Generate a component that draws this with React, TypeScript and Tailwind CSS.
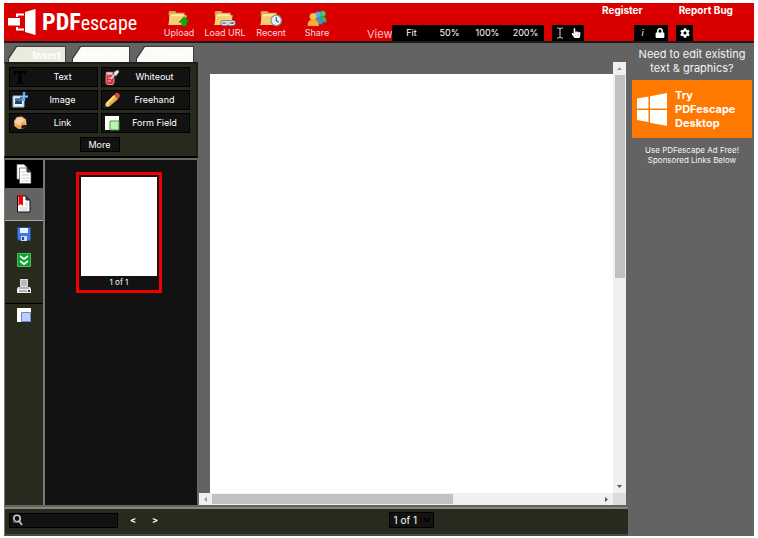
import React from "react";
import { FaCog, FaHandPointer, FaLock } from "react-icons/fa";

type IconProps = { className?: string };

const FolderShape = () => (
  <>
    <path d="M1 2.5 2 1h6l1.5 2H18v13H2z" fill="#d9a441" />
    <path d="M3 4h14v11H3z" fill="#f7e3a0" />
    <path d="M1 16 3.5 6H20l-1.500 10z" fill="#f6cd74" />
    <path d="M1 16 3.500 6H20" fill="none" stroke="#fff0bd" strokeWidth=".7" />
  </>
);

const UploadIcon = ({ className }: IconProps) => (
  <svg className={className} viewBox="0 0 24 18">
    <FolderShape />
    <path d="m17.500 7 5.500 6h-3v4h-5v-4h-3z" fill="#16a816" stroke="#078207" strokeWidth=".6" />
  </svg>
);

const LinkFolderIcon = ({ className }: IconProps) => (
  <svg className={className} viewBox="0 0 24 18">
    <FolderShape />
    <g fill="none" stroke="#68748a" strokeWidth="2.800">
      <rect x="8.500" y="12" width="6.500" height="3.500" rx="1.700" />
      <rect x="15.500" y="12" width="6.500" height="3.500" rx="1.700" />
    </g>
    <g fill="none" stroke="#dde4f0" strokeWidth="1.200">
      <rect x="8.500" y="12" width="6.500" height="3.500" rx="1.700" />
      <rect x="15.500" y="12" width="6.500" height="3.500" rx="1.700" />
      <path d="M12 13.700h6" />
    </g>
  </svg>
);

const RecentIcon = ({ className }: IconProps) => (
  <svg className={className} viewBox="0 0 24 18">
    <FolderShape />
    <circle cx="17.500" cy="11" r="5.500" fill="#e9f1f6" stroke="#8295a3" strokeWidth="1.300" />
    <path d="M17.500 7.500V11l2.500 2" fill="none" stroke="#344b5c" strokeWidth="1.100" />
  </svg>
);

const ShareIcon = ({ className }: IconProps) => (
  <svg className={className} viewBox="0 0 24 18">
    <g strokeWidth=".4">
      <path d="M13 13c0-5 2-6 5-6s4 2 4 6z" fill="#40b84b" stroke="#227d30" />
      <circle cx="18" cy="4" r="3.200" fill="#51c85b" stroke="#227d30" />
      <path d="M8 15c0-6 2-7 5-7s5 2 5 7z" fill="#3697dd" stroke="#17639b" />
      <circle cx="13" cy="5" r="3.500" fill="#54b2eb" stroke="#17639b" />
      <path d="M2 17c0-5 2-7 6-7s6 2 6 7z" fill="#ffac36" stroke="#bd6810" />
      <circle cx="8" cy="7" r="3.900" fill="#ffbd51" stroke="#bd6810" />
    </g>
  </svg>
);

const LogoMark = ({ className }: IconProps) => (
  <svg className={className} viewBox="0 0 28 27" fill="#fff">
    <path d="M17 3 27.500 0v26L17 23z" />
    <path d="M0 9h12v7.500H0z" />
    <path d="M8 4.500h8v2h-6V8H8zM8 18h2v1.500h6v2H8z" />
  </svg>
);

const TextIcon = ({ className }: IconProps) => (
  <svg className={className} viewBox="0 0 16 16">
    <path d="M2 2h12v4h-1l-1-2.500H9.500V13l2 .5v1h-7v-1l2-.5V3.500H4L3 6H2z" fill="#000" stroke="#050505" strokeWidth=".5" />
  </svg>
);

const WhiteoutIcon = ({ className }: IconProps) => (
  <svg className={className} viewBox="0 0 16 16">
    <path d="M2 6h8v8l-1 1.500H3L2 14z" fill="#d5353d" stroke="#f1a5a5" strokeWidth=".8" />
    <path d="M2 3h7v3H2z" fill="#efd8d8" stroke="#a93b42" strokeWidth=".7" />
    <path d="M4 9h4M4 12h3" stroke="#ffc1c1" />
    <path d="m7 10 5-7" stroke="#d8dee2" strokeWidth="1.500" />
    <path d="m10 3 4-2 1 2-3 4-2-1z" fill="#eee" stroke="#888" strokeWidth=".6" />
  </svg>
);

const ImageIcon = ({ className }: IconProps) => (
  <svg className={className} viewBox="0 0 16 16">
    <path d="M1 4h11v11H1z" fill="#e9f3fb" stroke="#9db4ca" />
    <path d="M3 6h7v6H3z" fill="#447ba8" />
    <path d="m3 11 2-3 2 2 2-1 1 2v1H3z" fill="#183e62" />
    <path d="M12 0v9M8 4.500h8" stroke="#295c94" strokeWidth="3" />
    <path d="M12 0v9M8 4.500h8" stroke="#8cc5f2" strokeWidth="1.500" />
  </svg>
);

const PencilIcon = ({ className }: IconProps) => (
  <svg className={className} viewBox="0 0 16 16">
    <path d="m1 15 1-4L10 3l4 4-8 7z" fill="#e7b23d" stroke="#9f6414" strokeWidth=".5" />
    <path d="m2 11 8-8 1.500 1.500-8 8z" fill="#ffe083" />
    <path d="m10 3 2-2c2-1 5 2 3.500 4L14 7z" fill="#e44242" />
    <path d="m1 15 1-4 4 3z" fill="#eed9b0" />
    <path d="m1 15 .5-2 1.500 1.500z" fill="#111" />
  </svg>
);

const LinkIcon = ({ className }: IconProps) => (
  <svg className={className} viewBox="0 0 16 16">
    <path d="m5 2 5-.5 4 3 .5 5-3 4-5 .5-4-3L2 6z" fill="#f5b77c" />
    <path d="m5 3 4-.5 3 2-2 4-4 1-3-3z" fill="#ffd0a0" />
    <path d="M10 10h4v4l-2-1-2 1-1-2z" fill="#291b12" />
    <path d="M4 11c4 2 6 0 6-3l3 1" fill="none" stroke="#f19b47" strokeWidth="1.500" />
  </svg>
);

const FormIcon = ({ className }: IconProps) => (
  <svg className={className} viewBox="0 0 16 16">
    <path d="M1 1h14v14H1z" fill="#fff" />
    <path d="M6 6h9v9H6z" fill="#b9f6ae" stroke="#4a9950" />
  </svg>
);

const PagesIcon = ({ className }: IconProps) => (
  <svg className={className} viewBox="0 0 16 20">
    <path d="M1 .5h7l3 3V15H1z" fill="#fff" stroke="#999" strokeWidth=".7" />
    <path d="M3.500 4H11l4 4v11.500H3.500z" fill="#fff" stroke="#555" strokeWidth=".7" />
    <path d="M11 4v4h4" fill="#333" stroke="#333" />
    <path d="M5.500 8h4M5.500 11h7.500M5.500 14h7.500M5.500 17h7.500" stroke="#ccc" />
  </svg>
);

const BookmarkIcon = ({ className }: IconProps) => (
  <svg className={className} viewBox="0 0 16 18">
    <path d="M1.500 1H10l4 4v12H1.500z" fill="#fff" stroke="#111" />
    <path d="M10 1v4h4" fill="#444" stroke="#222" />
    <path d="M4 13h8M4 15h8M9 8h3M9 10h3" stroke="#ccc" />
    <path d="M2.500 0H7v11L4.700 9 2.500 11z" fill="#f00000" />
  </svg>
);

const SaveIcon = ({ className }: IconProps) => (
  <svg className={className} viewBox="0 0 14 14">
    <path d="M.5.500h13v13H2l-1.500-1.500z" fill="#4778dc" stroke="#284d9f" />
    <path d="M3 1h8v5H3z" fill="#e8f1ff" />
    <path d="M4 9h6v5H4z" fill="#c8d9f3" />
    <path d="M5 10h2v3H5z" fill="#234b91" />
  </svg>
);

const DownloadIcon = ({ className }: IconProps) => (
  <svg className={className} viewBox="0 0 14 14">
    <path d="M.5.500h13v13H.5z" fill="#08a12b" stroke="#57b568" />
    <path d="m3 3 4 3 4-3M3 8l4 3 4-3" fill="none" stroke="#eaffea" strokeWidth="1.800" />
  </svg>
);

const PrintIcon = ({ className }: IconProps) => (
  <svg className={className} viewBox="0 0 14 14">
    <path d="M3 0h8v8H3z" fill="#ddd" />
    <path d="M4 2h6M4 4h6M4 6h6" stroke="#999" />
    <path d="M1 8h12l1 2v4H0v-4z" fill="#eee" />
    <path d="M2 9h10M2 12h8" stroke="#777" />
    <path d="M11 11h2v2h-2z" fill="#333" />
  </svg>
);

const StampIcon = ({ className }: IconProps) => (
  <svg className={className} viewBox="0 0 14 14">
    <path d="M0 0h14v14H0z" fill="#fff" />
    <path d="M4.500 4.500h9v9h-9z" fill="#bdcdff" stroke="#7185c6" />
  </svg>
);

const CursorIcon = ({ className }: IconProps) => (
  <svg className={className} viewBox="0 0 8 12">
    <path d="M1 1h2l1 1 1-1h2M4 2v8M1 11h2l1-1 1 1h2" fill="none" stroke="#ccc" />
  </svg>
);

const WindowsIcon = ({ className }: IconProps) => (
  <svg className={className} viewBox="0 0 30 33" fill="#fff">
    <path d="M0 5.500 11.500 3.500v12H0zM13 3.200 30 0v15.500H13zM0 17h11.500v12L0 27zM13 17h17v16l-17-3.200z" />
  </svg>
);

const SearchIcon = ({ className }: IconProps) => (
  <svg className={className} viewBox="0 0 12 12" fill="none">
    <circle cx="5" cy="4.500" r="3.200" stroke="#ccc" strokeWidth="1.600" />
    <path d="m7 7 3 4" stroke="#bbb" strokeWidth="2" />
    <path d="M1 8h4" stroke="#888" />
  </svg>
);

const files = [
  { label: "Upload", Icon: UploadIcon },
  { label: "Load URL", Icon: LinkFolderIcon },
  { label: "Recent", Icon: RecentIcon },
  { label: "Share", Icon: ShareIcon },
];

const inserts = [
  { label: "Text", Icon: TextIcon },
  { label: "Whiteout", Icon: WhiteoutIcon },
  { label: "Image", Icon: ImageIcon },
  { label: "Freehand", Icon: PencilIcon },
  { label: "Link", Icon: LinkIcon },
  { label: "Form Field", Icon: FormIcon },
];

const tabs = [
  { label: "Insert", color: "bg-[#e9ebdf]" },
  { label: "Annotate", color: "bg-[#fbfbfa]" },
  { label: "Page", color: "bg-[#fbfbfa]" },
];

const Header = () => (
  <header className="flex h-10 shrink-0 border-b-2 border-[#1c1c1c] bg-[#da0000] text-white">
    <a href="#" aria-label="PDFescape" className="flex w-[152px] shrink-0 items-center gap-1.5 pl-1">
      <LogoMark className="h-[27px] w-7 shrink-0" />
      <span className="flex items-baseline font-['Roboto_Condensed','Roboto',sans-serif] leading-none">
        <b className="text-[24px]">PDF</b>
        <span className="text-[20px]">escape</span>
      </span>
    </a>
    <nav className="flex shrink-0 pt-[7px]">
      {files.map(({ label, Icon }) => (
        <button key={label} className="flex w-[46px] flex-col items-center text-[9px] leading-3 whitespace-nowrap text-[#ffd9e2]">
          <Icon className="h-[17px] w-6" />
          {label}
        </button>
      ))}
    </nav>
    <div className="ml-[27px] flex shrink-0 items-end text-[9px]">
      <span className="text-[11px] leading-[14px] text-[#ffc0d0]">View</span>
      <div className="flex h-4 bg-black">
        {["Fit", "50%", "100%", "200%"].map((zoom) => (
          <button key={zoom} className="w-[38px]">{zoom}</button>
        ))}
      </div>
      <div className="ml-2 flex h-4 items-center bg-black">
        <button aria-label="Select text" className="flex w-4 justify-center"><CursorIcon className="h-3 w-2" /></button>
        <button aria-label="Pan" className="flex w-4 justify-center"><FaHandPointer className="size-2.5" /></button>
      </div>
    </div>
    <div className="ml-auto flex w-[152px] shrink-0 flex-col justify-between">
      <div className="flex gap-9 text-[10px] leading-[14px] font-bold whitespace-nowrap">
        <a href="#">Register</a>
        <a href="#">Report Bug</a>
      </div>
      <div className="ml-8 flex gap-2">
        <div className="flex h-4 items-center bg-black">
          <button className="w-[17px] text-[9px] italic">i</button>
          <button aria-label="Security" className="flex w-[17px] justify-center"><FaLock className="size-2.5" /></button>
        </div>
        <button aria-label="Settings" className="flex h-4 w-[17px] items-center justify-center bg-black">
          <FaCog className="size-2.5" />
        </button>
      </div>
    </div>
  </header>
);

const InsertPanel = () => (
  <div>
    <div role="tablist" className="flex gap-1.5 px-1 pt-[3px]">
      {tabs.map(({ label, color }) => (
        <button
          key={label}
          role="tab"
          className="h-4 min-w-0 flex-1 bg-[#3c3c3c] px-px pt-px [clip-path:polygon(8px_0,100%_0,100%_100%,0_100%,0_12px)]"
        >
          <span className={`block h-full pr-1 text-right text-[10px] leading-4 font-bold text-white [clip-path:polygon(8px_0,100%_0,100%_100%,0_100%,0_12px)] ${color}`}>
            {label}
          </span>
        </button>
      ))}
    </div>
    <div className="border-y-2 border-r-2 border-l border-t-[#1d1f16] border-r-[#1d1f16] border-b-black border-l-[#77796d] bg-[#272a1c] pt-[3px] pr-1.5 pb-1 pl-1 text-[9px] text-white">
      <div className="grid grid-cols-2 gap-[3px]">
        {inserts.map(({ label, Icon }) => (
          <button key={label} className="flex h-5 items-center border border-black bg-[#121212] pl-0.5">
            <Icon className="size-4" />
            <span className="flex-1 text-center">{label}</span>
          </button>
        ))}
      </div>
      <button className="mx-auto mt-1 block h-[15px] w-10 border border-black bg-[#121212] leading-3">More</button>
    </div>
  </div>
);

const SideRail = () => (
  <div className="flex w-[41px] shrink-0 flex-col border-r-2 border-l border-r-[#777] border-l-[#77796d] bg-[#272a1c]">
    <button aria-label="Pages" className="flex h-7 items-center justify-center bg-black"><PagesIcon className="h-5 w-4" /></button>
    <button aria-label="Bookmarks" className="flex h-8 items-center justify-center bg-[#636363]"><BookmarkIcon className="h-[18px] w-4" /></button>
    <div className="flex flex-col items-center border-t border-[#aaa] pb-1">
      <button aria-label="Save" className="h-[26px]"><SaveIcon className="size-3.5" /></button>
      <button aria-label="Download" className="h-[26px]"><DownloadIcon className="size-3.5" /></button>
      <button aria-label="Print" className="h-[26px]"><PrintIcon className="size-3.5" /></button>
    </div>
    <div className="flex justify-center border-t border-black pt-1">
      <button aria-label="Stamp"><StampIcon className="size-3.5" /></button>
    </div>
  </div>
);

const Document = () => (
  <main className="flex min-w-0 flex-1 flex-col pt-[19px] pr-0.5 pl-px">
    <div className="flex flex-1">
      <div className="flex flex-1 pt-3 pl-[11px]"><div className="flex-1 bg-white" /></div>
      <div className="flex w-[13px] flex-col items-center bg-[#f0f0f0]">
        <svg className="h-[13px] w-[7px] shrink-0" viewBox="0 0 7 13"><path d="m1 8 2.500-3L6 8z" fill="#999" /></svg>
        <div className="flex w-full flex-1 flex-col items-center"><div className="h-1/2 w-2.5 bg-[#c1c1c1]" /></div>
        <svg className="h-[13px] w-[7px] shrink-0" viewBox="0 0 7 13"><path d="m1 5 2.500 3L6 5z" fill="#555" /></svg>
      </div>
    </div>
    <div className="flex h-3 shrink-0 items-center bg-[#f0f0f0]">
      <svg className="h-[7px] w-[13px] shrink-0" viewBox="0 0 13 7"><path d="M8 1 5 3.500 8 6z" fill="#999" /></svg>
      <div className="flex-1"><div className="h-2.5 w-[62%] bg-[#c1c1c1]" /></div>
      <svg className="h-[7px] w-[13px] shrink-0" viewBox="0 0 13 7"><path d="m5 1 3 2.500L5 6z" fill="#555" /></svg>
      <div className="h-full w-[13px] bg-[#dcdcdc]" />
    </div>
  </main>
);

const Footer = () => (
  <footer className="mt-0.5 flex h-[29px] shrink-0 items-center border-t-2 border-b-2 border-l border-t-[#85867d] border-b-[#4a4b43] border-l-[#77796d] bg-[#272a1c] pb-[3px] text-[9px] text-white">
    <label className="ml-1 flex h-[15px] w-[109px] items-center border border-black bg-[#121212] pl-0.5">
      <SearchIcon className="size-3 shrink-0" />
      <input aria-label="Search" className="h-full w-full min-w-0 px-1 outline-none" />
    </label>
    <button className="ml-2.5 w-2.5 font-bold">&lt;</button>
    <button className="ml-3 w-2.5 font-bold">&gt;</button>
    <div className="flex flex-1 justify-center pl-[34px]">
      <div className="relative">
        <select aria-label="Page" className="block h-4 w-[45px] appearance-none border border-black bg-[#121212] pl-1 text-[10px] leading-3">
          <option>1 of 1</option>
        </select>
        <svg className="pointer-events-none absolute top-1.5 right-1 h-1 w-1.5" viewBox="0 0 6 4"><path d="m0 0 3 3 3-3" fill="none" stroke="#000" strokeWidth="2" /></svg>
      </div>
    </div>
  </footer>
);

const Sidebar = () => (
  <aside className="w-[126px] shrink-0 px-0.5 pt-1 pl-1 text-center text-[#f5f5f5]">
    <p className="text-[11px] leading-[14px] whitespace-nowrap">Need to edit existing<br />text &amp; graphics?</p>
    <a href="#" className="mt-[5px] flex h-[58px] items-center gap-2 bg-[#ff7800] pl-[5px] text-left text-[11px] leading-[14px] font-bold text-white">
      <WindowsIcon className="h-[33px] w-[30px] shrink-0" />
      <span>Try<br />PDFescape<br />Desktop</span>
    </a>
    <p className="mt-[7px] text-[8px] leading-[10px] whitespace-nowrap">Use PDFescape Ad Free!<br />Sponsored Links Below</p>
  </aside>
);

const App: React.FC = () => {
  return (
    <div className="flex min-h-screen flex-col bg-white px-1 pt-[3px] pb-0.5 font-['Inter','Open_Sans',sans-serif]">
      <Header />
      <div className="flex flex-1 bg-[#636363]">
        <div className="flex min-w-0 flex-1 flex-col">
          <div className="flex flex-1">
            <section className="flex w-[194px] shrink-0 flex-col">
              <InsertPanel />
              <div className="flex flex-1 border-t-2 border-r border-[#666760]">
                <SideRail />
                <div className="flex flex-1 items-start justify-center bg-[#121212] pt-3 pr-1">
                  <button className="border-[3px] border-[#f00000] bg-[#121212] px-0.5 pt-0.5 text-[8px] text-white">
                    <span className="block h-[99px] w-[76px] bg-white" />
                    <span className="block h-3.5 leading-3">1 of 1</span>
                  </button>
                </div>
              </div>
            </section>
            <Document />
          </div>
          <Footer />
        </div>
        <Sidebar />
      </div>
    </div>
  );
};

export default App;
